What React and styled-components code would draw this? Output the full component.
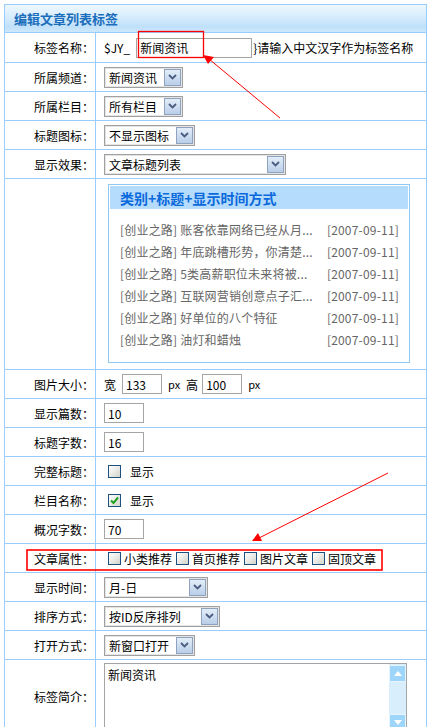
import React from "react";
import styled, { createGlobalStyle } from "styled-components";

const GlobalStyle = createGlobalStyle`
  body {
    margin: 0;
    background: #fff;
    font-family: "Noto Sans CJK SC", "Liberation Sans", sans-serif;
    font-size: 12px;
    color: #000;
  }
`;

const line = "#99ccff";

const Page = styled.div`
  position: relative;
  padding: 4px;
  width: 429px;
  height: 727px;
  box-sizing: border-box;
  overflow: hidden;
`;

const Panel = styled.div`
  width: 423px;
  box-sizing: border-box;
  border: 1px solid ${line};
  border-bottom: none;
`;

const Header = styled.div`
  height: 27px;
  border-bottom: 1px solid ${line};
  background: linear-gradient(#eef7fe 0%, #d6ecfc 45%, #bfe0fa 80%, #cde8fb 100%);
  display: flex;
  align-items: center;
  padding-left: 9px;
  font-size: 13px;
  font-weight: bold;
  color: #1a6dbb;
`;

const Row = styled.div`
  display: grid;
  grid-template-columns: 91px 1fr;
  height: ${(p) => p.$h || 28}px;
  border-bottom: 1px solid ${line};
`;

const Label = styled.div`
  box-sizing: border-box;
  border-right: 1px solid ${line};
  display: flex;
  align-items: center;
  justify-content: flex-end;
  padding-right: 1px;
  white-space: nowrap;
`;

const Value = styled.div`
  display: flex;
  align-items: center;
  padding-left: ${(p) => p.$pad || 8}px;
  white-space: nowrap;
`;

const TextInput = styled.input`
  box-sizing: border-box;
  width: ${(p) => p.$w}px;
  height: 20px;
  margin-left: ${(p) => p.$ml || 0}px;
  border: 1px solid #a5a5a5;
  padding: 0 3px;
  font: inherit;
  color: #000;
  background: #fff;
  outline: none;
`;

const Hint = styled.span`
  margin-left: 1px;
`;

const Unit = styled.span`
  font-size: 11px;
  margin: 0 6px;
`;

const SelectBox = styled.div`
  box-sizing: border-box;
  width: ${(p) => p.$w}px;
  height: 21px;
  border: 1px solid #a0a0a0;
  box-shadow: inset 0 0 0 1px #e4e4e4;
  background: #fff;
  display: flex;
  align-items: center;
`;

const SelectText = styled.span`
  flex: 1;
  padding-left: 4px;
`;

const DropButton = styled.span`
  box-sizing: border-box;
  width: 17px;
  height: 17px;
  margin-right: 1px;
  border: 1px solid #8fa3c0;
  background: linear-gradient(#e3edf8, #b9cee8);
  display: flex;
  align-items: center;
  justify-content: center;
`;

const Box = styled.span`
  box-sizing: border-box;
  width: 13px;
  height: 13px;
  margin-right: 3px;
  border: 1px solid #1c5180;
  background: linear-gradient(135deg, #ffffff 0%, #e8e8e4 55%, #d4d4cc 100%);
  display: inline-flex;
  align-items: center;
  justify-content: center;
`;

const CheckLabel = styled.span`
  margin-right: 4px;
  margin-left: ${(p) => p.$ml || 0}px;
`;

const Preview = styled.div`
  box-sizing: border-box;
  width: 302px;
  height: 179px;
  margin: 5px 0 0 4px;
  border: 1px solid #8ec8f5;
  padding: 1px;
  align-self: flex-start;
`;

const PreviewTitle = styled.div`
  height: 23px;
  background: #b5dbfd;
  display: flex;
  align-items: center;
  padding-left: 10px;
  font-size: 14px;
  font-weight: bold;
  color: #0a6adb;
`;

const List = styled.div`
  padding: 10px 9px 0 10px;
`;

const Item = styled.div`
  display: flex;
  justify-content: space-between;
  height: 22px;
  line-height: 22px;
  color: #666;
  letter-spacing: 0.2px;
`;

const Area = styled.div`
  box-sizing: border-box;
  width: 303px;
  height: 70px;
  margin-top: 3px;
  border: 1px solid #a5a5a5;
  display: flex;
  align-self: flex-start;
`;

const AreaText = styled.textarea`
  flex: 1;
  border: none;
  resize: none;
  outline: none;
  font: inherit;
  padding: 2px 3px;
  color: #000;
`;

const ScrollBar = styled.div`
  width: 17px;
  background: #d8eefc;
  display: flex;
  flex-direction: column;
  justify-content: space-between;
  padding: 1px 0;
`;

const ScrollButton = styled.div`
  height: 15px;
  background: #9dd5fb;
  border: 1px solid #e6f4fe;
  display: flex;
  align-items: center;
  justify-content: center;
`;

const Overlay = styled.svg`
  position: absolute;
  left: 0;
  top: 0;
  pointer-events: none;
`;

function Select({ w, children }) {
  return (
    <SelectBox $w={w}>
      <SelectText>{children}</SelectText>
      <DropButton>
        <svg width="9" height="6" viewBox="0 0 9 6">
          <path d="M1 1 L4.5 4.5 L8 1" fill="none" stroke="#4a5d80" strokeWidth="1.8" />
        </svg>
      </DropButton>
    </SelectBox>
  );
}

function Check({ checked }) {
  return (
    <Box>
      {checked && (
        <svg width="9" height="9" viewBox="0 0 9 9">
          <path d="M1 4.5 L3.5 7 L8 1.5" fill="none" stroke="#21a31f" strokeWidth="2" />
        </svg>
      )}
    </Box>
  );
}

const news = [
  ["[创业之路] 账客依靠网络已经从月...", "[2007-09-11]"],
  ["[创业之路] 年底跳槽形势，你清楚...", "[2007-09-11]"],
  ["[创业之路] 5类高薪职位未来将被...", "[2007-09-11]"],
  ["[创业之路] 互联网营销创意点子汇...", "[2007-09-11]"],
  ["[创业之路] 好单位的八个特征", "[2007-09-11]"],
  ["[创业之路] 油灯和蜡烛", "[2007-09-11]"],
];

export default function App() {
  return (
    <Page>
      <GlobalStyle />
      <Panel>
        <Header>编辑文章列表标签</Header>

        <Row $h={29}>
          <Label>标签名称：</Label>
          <Value>
            <span>$JY_</span>
            <TextInput $w={116} $ml={6} defaultValue="新闻资讯" />
            <Hint>}请输入中文汉字作为标签名称</Hint>
          </Value>
        </Row>
        <Row>
          <Label>所属频道：</Label>
          <Value><Select w={79}>新闻资讯</Select></Value>
        </Row>
        <Row>
          <Label>所属栏目：</Label>
          <Value><Select w={79}>所有栏目</Select></Value>
        </Row>
        <Row>
          <Label>标题图标：</Label>
          <Value><Select w={91}>不显示图标</Select></Value>
        </Row>
        <Row>
          <Label>显示效果：</Label>
          <Value><Select w={182}>文章标题列表</Select></Value>
        </Row>
        <Row $h={190}>
          <Label />
          <Value>
            <Preview>
              <PreviewTitle>类别+标题+显示时间方式</PreviewTitle>
              <List>
                {news.map(([title, date], i) => (
                  <Item key={i}>
                    <span>{title}</span>
                    <span>{date}</span>
                  </Item>
                ))}
              </List>
            </Preview>
          </Value>
        </Row>
        <Row>
          <Label>图片大小：</Label>
          <Value>
            <span>宽</span>
            <TextInput $w={40} $ml={6} defaultValue="133" />
            <Unit>px</Unit>
            <span>高</span>
            <TextInput $w={40} $ml={4} defaultValue="100" />
            <Unit>px</Unit>
          </Value>
        </Row>
        <Row>
          <Label>显示篇数：</Label>
          <Value><TextInput $w={40} defaultValue="10" /></Value>
        </Row>
        <Row>
          <Label>标题字数：</Label>
          <Value><TextInput $w={40} defaultValue="16" /></Value>
        </Row>
        <Row>
          <Label>完整标题：</Label>
          <Value $pad={12}>
            <Check />
            <CheckLabel $ml={6}>显示</CheckLabel>
          </Value>
        </Row>
        <Row>
          <Label>栏目名称：</Label>
          <Value $pad={12}>
            <Check checked />
            <CheckLabel $ml={6}>显示</CheckLabel>
          </Value>
        </Row>
        <Row>
          <Label>概况字数：</Label>
          <Value><TextInput $w={40} defaultValue="70" /></Value>
        </Row>
        <Row>
          <Label>文章属性：</Label>
          <Value $pad={12}>
            <Check />
            <CheckLabel>小类推荐</CheckLabel>
            <Check />
            <CheckLabel>首页推荐</CheckLabel>
            <Check />
            <CheckLabel>图片文章</CheckLabel>
            <Check />
            <CheckLabel>固顶文章</CheckLabel>
          </Value>
        </Row>
        <Row>
          <Label>显示时间：</Label>
          <Value><Select w={104}>月-日</Select></Value>
        </Row>
        <Row>
          <Label>排序方式：</Label>
          <Value><Select w={116}>按ID反序排列</Select></Value>
        </Row>
        <Row>
          <Label>打开方式：</Label>
          <Value><Select w={91}>新窗口打开</Select></Value>
        </Row>
        <Row $h={72}>
          <Label>标签简介：</Label>
          <Value>
            <Area>
              <AreaText defaultValue="新闻资讯" />
              <ScrollBar>
                <ScrollButton>
                  <svg width="8" height="5" viewBox="0 0 8 5">
                    <path d="M0 5 L4 0 L8 5 Z" fill="#fff" />
                  </svg>
                </ScrollButton>
                <ScrollButton>
                  <svg width="8" height="5" viewBox="0 0 8 5">
                    <path d="M0 0 L4 5 L8 0 Z" fill="#fff" />
                  </svg>
                </ScrollButton>
              </ScrollBar>
            </Area>
          </Value>
        </Row>
      </Panel>

      {/* red callouts drawn on top of the form */}
      <Overlay width="429" height="727" viewBox="0 0 429 727">
        <rect x="138.5" y="31.5" width="65" height="26" fill="none" stroke="#ff0000" strokeWidth="1.3" />
        <line x1="280" y1="118" x2="209" y2="59" stroke="#ff0000" strokeWidth="1" />
        <polygon points="203,55 214,57 208,64" fill="#ff0000" />

        <rect x="27" y="550" width="355" height="20" fill="none" stroke="#ff0000" strokeWidth="1.6" />
        <line x1="388" y1="473" x2="257" y2="539" stroke="#ff0000" strokeWidth="1" />
        <polygon points="252,541 262,541 258,533" fill="#ff0000" />
      </Overlay>
    </Page>
  );
}
